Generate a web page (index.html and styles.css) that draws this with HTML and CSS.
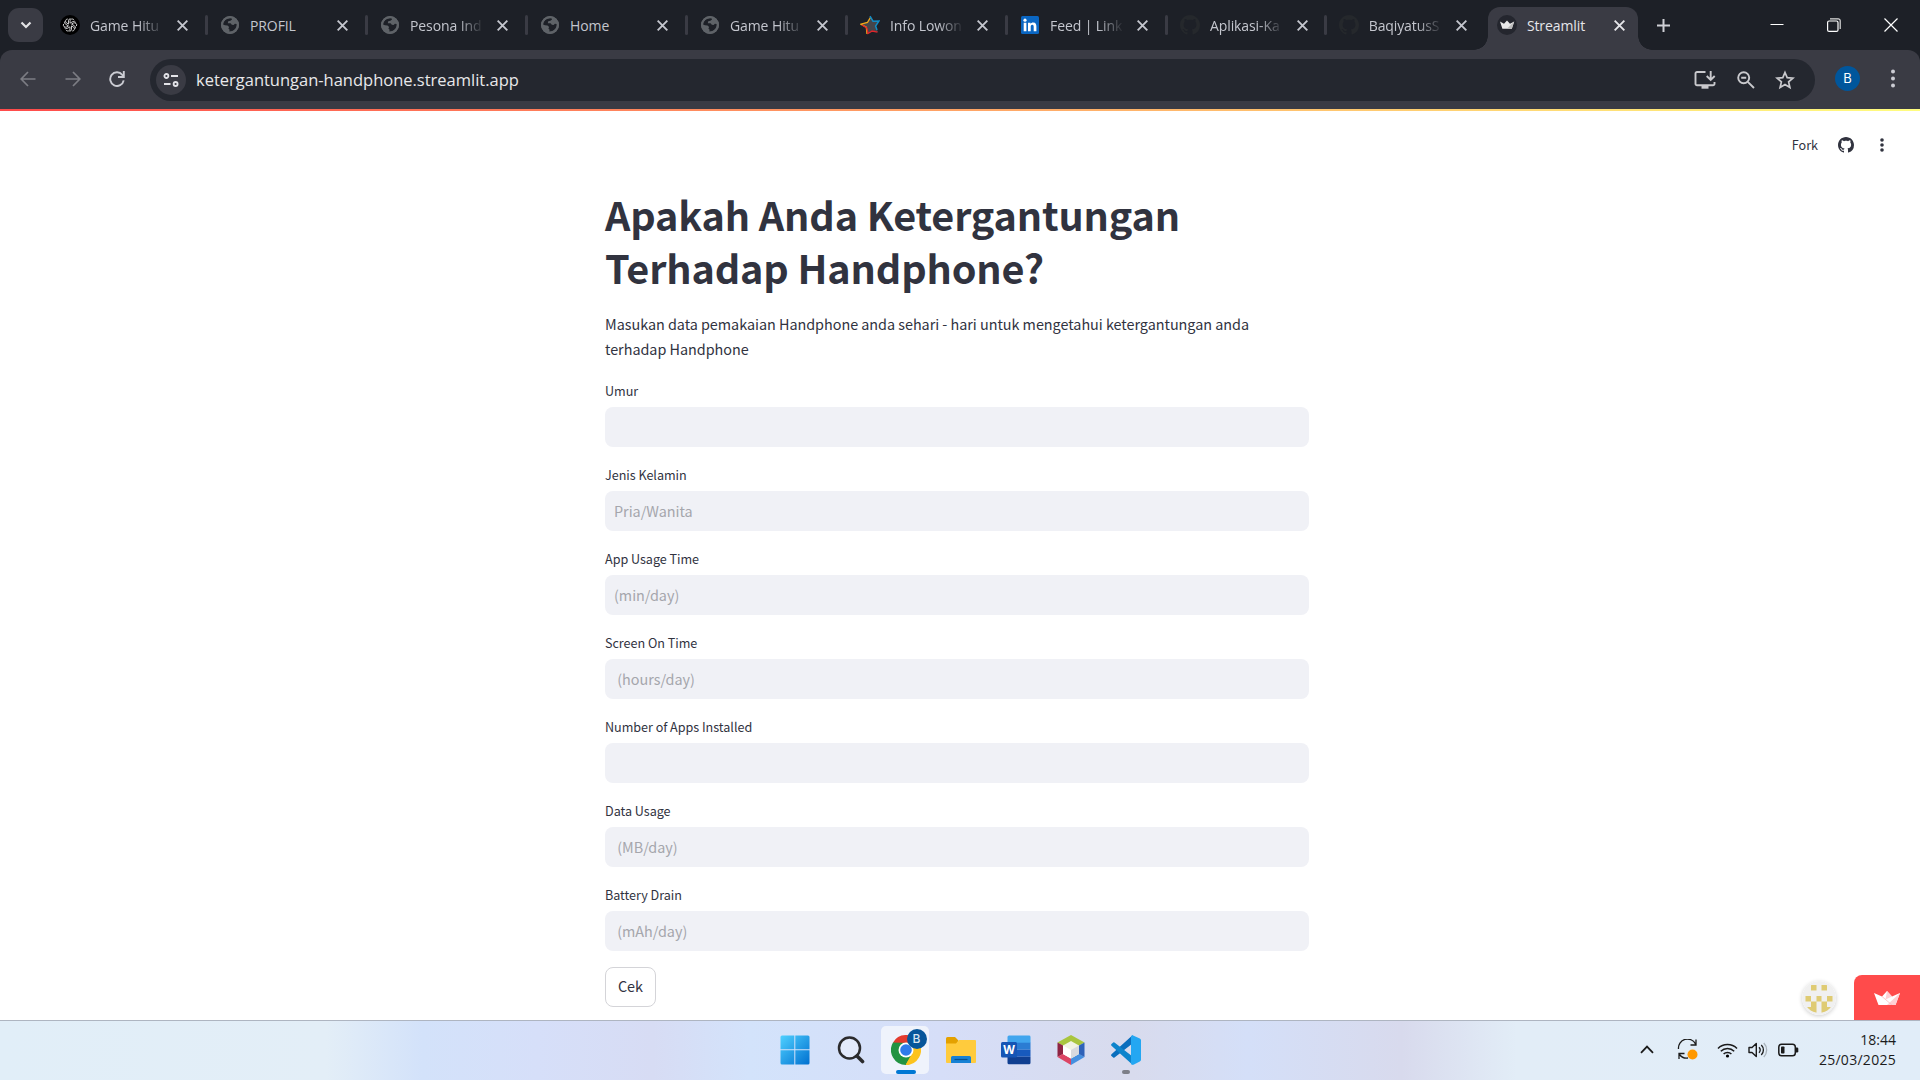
FILE: index.html
```
<!DOCTYPE html>
<html lang="id">
<head>
<meta charset="utf-8">
<title>Streamlit</title>
<link rel="stylesheet" href="styles.css">
</head>
<body>
<svg class="defs" aria-hidden="true">
  <symbol id="globe" viewBox="0 0 20 20"><circle cx="10" cy="10" r="9" fill="#5f6368"/><path d="M4.200 6.200C5.500 4.200 8.500 3 11.600 3.200l.4 1.300-1.600 1.300-2.200.4-.4 2 2.800.1 1.200 1.400 1.800.2 1.300-1.200 1.800.4c.3 3.400-1.700 5.700-4.300 7l-3.100.5.300-1.900-1.200-1.300.700-1.300-1.600-1.700-2.500-.1-1.900-.8c-.2-1.200.2-2.300 1.100-3.300z" fill="#1d2027"/><circle cx="10" cy="10" r="8" fill="none" stroke="#5f6368" stroke-width="2"/></symbol>
  <symbol id="octo" viewBox="0 0 16 16"><path fill="currentColor" d="M8 0C3.58 0 0 3.58 0 8c0 3.540 2.290 6.530 5.470 7.590.4.070.55-.17.55-.38 0-.19-.01-.82-.01-1.490-2.010.37-2.530-.49-2.690-.94-.09-.23-.48-.94-.82-1.130-.28-.15-.68-.52-.01-.53.63-.01 1.080.58 1.230.82.72 1.210 1.870.87 2.330.66.070-.52.28-.87.51-1.070-1.780-.2-3.640-.89-3.640-3.950 0-.87.31-1.590.82-2.150-.08-.2-.36-1.020.08-2.120 0 0 .67-.21 2.200.82.64-.18 1.320-.27 2-.27s1.360.09 2 .27c1.530-1.040 2.200-.82 2.200-.82.44 1.100.16 1.920.08 2.120.51.56.82 1.270.82 2.150 0 3.070-1.870 3.750-3.650 3.950.29.25.54.73.54 1.480 0 1.070-.01 1.930-.01 2.200 0 .21.15.46.55.38A8.010 8.010 0 0 0 16 8c0-4.420-3.580-8-8-8z"/></symbol>
  <symbol id="x" viewBox="0 0 10 10"><path d="M.6.6l8.800 8.800M9.400.6L.6 9.400" stroke="currentColor" stroke-width="1.700" fill="none"/></symbol>
</svg>
<div class="screen">
  <header class="tabstrip">
    <button class="tabsearch"><svg width="12" height="8" viewBox="0 0 12 8"><path d="M1.500 1.500L6 6l4.500-4.500" fill="none" stroke="#e3e3e6" stroke-width="2.200"/></svg></button>
    <div class="tabs">
      <div class="tab"><svg class="fav" viewBox="0 0 20 20"><circle cx="10" cy="10" r="10" fill="#000"/><g fill="none" stroke="#dedede" stroke-width="1" transform="translate(1.500 1.500) scale(.85)"><path id="pet" d="M10 7.800V5.200a2.600 2.600 0 0 1 4.800-1.100M9.900 7.900l3.600-2a2.500 2.500 0 0 1 3.200 1"/><use href="#pet" transform="rotate(60 10 10)"/><use href="#pet" transform="rotate(120 10 10)"/><use href="#pet" transform="rotate(180 10 10)"/><use href="#pet" transform="rotate(240 10 10)"/><use href="#pet" transform="rotate(300 10 10)"/></g></svg><span class="name fade">Game Hitu</span><svg class="close"><use href="#x"/></svg></div>
      <div class="tab"><svg class="fav"><use href="#globe"/></svg><span class="name">PROFIL</span><svg class="close"><use href="#x"/></svg></div>
      <div class="tab"><svg class="fav"><use href="#globe"/></svg><span class="name fade">Pesona Ind</span><svg class="close"><use href="#x"/></svg></div>
      <div class="tab"><svg class="fav"><use href="#globe"/></svg><span class="name">Home</span><svg class="close"><use href="#x"/></svg></div>
      <div class="tab"><svg class="fav"><use href="#globe"/></svg><span class="name fade">Game Hitu</span><svg class="close"><use href="#x"/></svg></div>
      <div class="tab"><svg class="fav" viewBox="0 0 20 20"><path d="M10.500 1l2.500 5.200 6-.2-3.300 5 2.300 6.200-5.600-1.700L7 19l-.5-6.500L1 9l5.500-1.800z" fill="#45464b"/><path d="M10.500 2.500L7.500 7.500 1 9.200l5.300 3L7 19" fill="none" stroke="#f0a818" stroke-width="1.300"/><path d="M2 10l4.800 3L8 18.500l4.200-2.500 5.300 1.200" fill="none" stroke="#e0262c" stroke-width="1.300"/><path d="M10 1.200l3 5 6-.2-3.400 5 1.400 4" fill="none" stroke="#128bc4" stroke-width="1.500"/></svg><span class="name fade">Info Lowon</span><svg class="close"><use href="#x"/></svg></div>
      <div class="tab"><svg class="fav" viewBox="0 0 20 20"><rect x="1" y="1" width="18" height="18" rx="1.500" fill="#0a66c2"/><circle cx="5" cy="5.200" r="1.600" fill="#fff"/><path d="M3.700 7.800h2.700v8.400H3.700zM8 7.800h2.500V9c.5-.8 1.400-1.400 2.700-1.400 2.600 0 3.200 1.700 3.200 4v4.600h-2.700V12c0-1.100-.1-2.200-1.400-2.200s-1.600 1-1.600 2.200v4.200H8z" fill="#fff"/></svg><span class="name fade">Feed | Link</span><svg class="close"><use href="#x"/></svg></div>
      <div class="tab narrow"><svg class="fav dim"><use href="#octo"/></svg><span class="name fade">Aplikasi-Ka</span><svg class="close"><use href="#x"/></svg></div>
      <div class="tab narrow"><svg class="fav dim"><use href="#octo"/></svg><span class="name fade">BaqiyatusS</span><svg class="close"><use href="#x"/></svg></div>
      <div class="tab active"><svg class="fav" viewBox="0 0 20 20"><circle cx="10" cy="10" r="10" fill="#24262e"/><path d="M3 6.500l4 2.200L10 5.500l3 3.200 4.200-2.200-2.400 7.200H5.400z" fill="#e9e9ea"/><path d="M17.200 6.500L10 13.700h4.800z" fill="#bbb"/></svg><span class="name">Streamlit</span><svg class="close"><use href="#x"/></svg></div>
    </div>
    <svg class="newtab" width="13" height="13" viewBox="0 0 13 13"><path d="M6.500 0v13M0 6.500h13" stroke="#cfd0d6" stroke-width="2"/></svg>
    <div class="caption">
      <svg width="14" height="14" viewBox="0 0 14 14"><path d="M.5 6.500h13" stroke="#fff"/></svg>
      <svg width="14" height="14" viewBox="0 0 14 14"><rect x=".6" y="3" width="10.400" height="10.400" rx="1.500" fill="none" stroke="#fff" stroke-width="1.200"/><path d="M3 .8h8.200a2 2 0 0 1 2 2V11" fill="none" stroke="#ddd" stroke-width="1.200"/></svg>
      <svg width="14" height="14" viewBox="0 0 14 14"><path d="M.5.5l13 13M13.500.5l-13 13" stroke="#fff" stroke-width="1.200"/></svg>
    </div>
  </header>
  <nav class="toolbar">
    <div class="navbtns">
      <svg width="16" height="16" viewBox="0 0 16 16"><path d="M15.500 8H1.500M8 1L1.200 8 8 15" fill="none" stroke="#7c7d84" stroke-width="1.700"/></svg>
      <svg width="16" height="16" viewBox="0 0 16 16"><path d="M.5 8h14M8 1l6.800 7L8 15" fill="none" stroke="#7c7d84" stroke-width="1.700"/></svg>
      <svg width="16" height="16" viewBox="0 0 16 16"><path d="M14.700 9.400A6.800 6.800 0 1 1 13.300 3.800L14.500 5" fill="none" stroke="#cbccd3" stroke-width="1.900"/><path d="M14.800 0v6H9" fill="none" stroke="#cbccd3" stroke-width="1.900"/></svg>
    </div>
    <div class="omnibox">
      <span class="site"><svg width="16" height="14" viewBox="0 0 16 14"><g fill="none" stroke="#e3e3e8" stroke-width="1.800"><circle cx="3.400" cy="3" r="2"/><path d="M8 3h7M1 11h6.500"/><circle cx="12.600" cy="11" r="2"/></g></svg></span>
      <span class="url">ketergantungan-handphone.streamlit.app</span>
      <div class="actions">
        <svg width="22" height="20" viewBox="0 0 22 20"><path d="M11.500 2H3a1.500 1.500 0 0 0-1.500 1.500v10.300A1.500 1.500 0 0 0 3 15.300h16a1.500 1.500 0 0 0 1.500-1.500V12" fill="none" stroke="#c9c9cd" stroke-width="1.900"/><path d="M7.500 15h7v3.700h-7z" fill="#c9c9cd"/><path d="M16.700 1v8.500M12.700 6l4 4 4-4" fill="none" stroke="#c9c9cd" stroke-width="1.900"/></svg>
        <svg width="18" height="18" viewBox="0 0 18 18"><circle cx="6.700" cy="6.700" r="5.500" fill="none" stroke="#c9c9cd" stroke-width="1.900"/><path d="M10.800 10.800l6.200 6.200M4.200 6.700h5" stroke="#c9c9cd" stroke-width="1.900"/></svg>
        <svg width="20" height="20" viewBox="0 0 20 20"><path d="M10 2.500l2.200 5.200 5.700.5-4.300 3.700 1.300 5.600-4.900-3-4.900 3 1.300-5.600-4.300-3.700 5.700-.5z" fill="none" stroke="#c9c9cd" stroke-width="1.700"/></svg>
      </div>
    </div>
    <span class="profile">B</span>
    <svg class="menu" width="6" height="20" viewBox="0 0 6 20"><g fill="#cbccd3"><circle cx="3" cy="2.500" r="2"/><circle cx="3" cy="9.500" r="2"/><circle cx="3" cy="16.500" r="2"/></g></svg>
  </nav>
  <main class="page">
    <div class="rainbow"></div>
    <div class="apphead">
      <span class="fork">Fork</span>
      <svg width="16" height="16"><use href="#octo"/></svg>
      <svg width="4" height="14" viewBox="0 0 4 14"><g fill="#31333f"><circle cx="2" cy="2" r="1.800"/><circle cx="2" cy="7" r="1.800"/><circle cx="2" cy="12" r="1.800"/></g></svg>
    </div>
    <form class="form">
      <h1>Apakah Anda Ketergantungan<br>Terhadap Handphone?</h1>
      <p>Masukan data pemakaian Handphone anda sehari - hari untuk mengetahui ketergantungan anda terhadap Handphone</p>
      <label>Umur<span class="input"></span></label>
      <label>Jenis Kelamin<span class="input">Pria/Wanita</span></label>
      <label>App Usage Time<span class="input">(min/day)</span></label>
      <label>Screen On Time<span class="input"> (hours/day)</span></label>
      <label>Number of Apps Installed<span class="input"></span></label>
      <label>Data Usage<span class="input"> (MB/day)</span></label>
      <label>Battery Drain<span class="input"> (mAh/day)</span></label>
      <button class="check" type="button">Cek</button>
    </form>
    <div class="host">
      <svg class="creator" width="34" height="34" viewBox="0 0 34 34"><clipPath id="c"><circle cx="17" cy="17" r="15"/></clipPath><circle cx="17" cy="17" r="17" fill="#f0f0f0"/><path clip-path="url(#c)" fill="#dfcb73" d="M9 4h5.500v5.500H9zM19.500 4H25v5.500h-5.500zM3.500 15H9v5.500H3.500zM14.500 15h5v5.500h-5zM25 15h5.500v5.500H25zM9 20.500h5.500V32h-11v-6H9zM19.500 20.500H25V26h5.500v6h-11z"/></svg>
      <span class="badge"><svg width="26" height="14" viewBox="0 0 26 14"><path d="M0 2l8 3.500L13 0l5 5.500L26 2l-4.500 12h-17z" fill="#fff"/><path d="M13 0l5 5.500-6.500 3z" fill="#ffd0d4"/><path d="M26 2l-4.500 12H13z" fill="#ffd0d4"/><path d="M8 5.500L18 14" stroke="#ffbcbf" stroke-width=".8"/></svg></span>
    </div>
  </main>
  <footer class="taskbar">
    <div class="apps">
      <span class="app"><svg width="30" height="30" viewBox="0 0 30 30"><defs><linearGradient id="w" x1="0" y1="0" x2="1" y2="1"><stop offset="0" stop-color="#4fd0ff"/><stop offset="1" stop-color="#0070d0"/></linearGradient></defs><path fill="url(#w)" d="M.5 2a1.500 1.500 0 0 1 1.500-1.500h12.300v13.800H.5zM15.300.5H28A1.500 1.500 0 0 1 29.500 2v12.300H15.300zM.5 15.300h13.800v14.200H2A1.500 1.500 0 0 1 .5 28zM15.300 15.300h14.200V28a1.500 1.500 0 0 1-1.500 1.500H15.300z"/></svg></span>
      <span class="app"><svg width="28" height="28" viewBox="0 0 28 28"><circle cx="12.500" cy="12" r="10.500" fill="#e3eafb" stroke="#2b2b2d" stroke-width="2.500"/><path d="M20 20l5.500 5.500" stroke="#2b2b2d" stroke-width="3.600" stroke-linecap="round"/></svg></span>
      <span class="app current"><svg width="30" height="30" viewBox="0 0 30 30"><path d="M15 15L2 7.500A15 15 0 0 1 28 7.500z" fill="#e33b2e"/><path d="M15 15L28 7.500A15 15 0 0 1 15 30z" fill="#fcc31e"/><path d="M15 15v15A15 15 0 0 1 2 7.500z" fill="#229342"/><path d="M15 7.800H28.200l-7 10.800z" fill="#fcc31e"/><path d="M8.800 18.600L2 7.500 15 7.800z" fill="#229342"/><path d="M2 7.500h26L15 8z" fill="#e33b2e"/><path d="M8.800 18.600L15 15l6.200 3.600L14.500 30z" fill="#229342"/><path d="M21.200 18.600L14.700 30H18l7-9z" fill="#fcc31e"/><circle cx="15" cy="15" r="7.500" fill="#fff"/><circle cx="15" cy="15" r="5.800" fill="#2f7bea"/></svg><b class="who">B</b><i class="run wide"></i></span>
      <span class="app"><svg width="30" height="28" viewBox="0 0 30 28"><path d="M0 2.500A1.500 1.500 0 0 1 1.500 1H9l3.500 3.500L10 9H0z" fill="#e4a100"/><path d="M0 7.500h10L13 4h16a1 1 0 0 1 1 1v21a1 1 0 0 1-1 1H1a1 1 0 0 1-1-1z" fill="#ffcb3d"/><path d="M5 27v-5.500A1.500 1.500 0 0 1 6.500 20h17a1.500 1.500 0 0 1 1.500 1.500V27z" fill="#1781d4"/><path d="M8.500 23.500h13" stroke="#07508f" stroke-width="1.200"/></svg></span>
      <span class="app"><svg width="30" height="30" viewBox="0 0 30 30"><path d="M6.500 2A1.500 1.500 0 0 1 8 .5h20A1.500 1.500 0 0 1 29.500 2v6h-23z" fill="#41a5ee"/><path d="M6.500 7.700h23v7h-23z" fill="#2b7cd3"/><path d="M6.500 14.700h23v7h-23z" fill="#185abd"/><path d="M6.500 21.700h23v6A1.500 1.500 0 0 1 28 29.200H8a1.500 1.500 0 0 1-1.500-1.500z" fill="#103f91"/><rect x="0" y="7" width="16" height="15.500" rx="1.500" fill="#1555b5"/><text class="wordmark" x="8" y="19" text-anchor="middle">W</text></svg></span>
      <span class="app"><svg width="28" height="32" viewBox="0 0 28 32"><path d="M14 1l13.500 7.500L14 16 .5 8.500z" fill="#a9c53f"/><path d="M.5 8.500L6 11.500V20L.5 23z" fill="#8e2443"/><path d="M.5 23L6 19.800l8 4.500V31z" fill="#dc4565"/><path d="M14 31v-6.700l8-4.500 5.500 3.200z" fill="#4590e0"/><path d="M27.500 8.500V23L22 20v-8.500z" fill="#2f62b8"/><path d="M14 7l8 4.500v8.500l-8 4.500L6 20v-8.500z" fill="#f1f3e4"/><path d="M14 16l8-4.500v8.500l-8 4.500z" fill="#d8dadf"/><path d="M14 16l-8-4.500v8.500l8 4.500z" fill="#fff"/></svg></span>
      <span class="app"><svg width="30" height="30" viewBox="0 0 30 30"><path d="M21.500 8.500L3.500 22.500a1 1 0 0 1-1.300 0L.5 21a1.200 1.200 0 0 1 0-1.700L21.500.3z" fill="#0a6ebd"/><path d="M21.500 21.500L3.500 7.500a1 1 0 0 0-1.300 0L.5 9a1.200 1.200 0 0 0 0 1.700l21 19z" fill="#0d84cc"/><path d="M21 0l7.800 3.400A2 2 0 0 1 30 5.200v19.600a2 2 0 0 1-1.200 1.800L22.500 29.700c-1 .4-2.500 0-2.500-1.500V2z" fill="#24a7f2"/></svg><i class="run"></i></span>
    </div>
    <div class="tray">
      <svg width="14" height="9" viewBox="0 0 14 9"><path d="M1 7.800L7 1.600l6 6.200" fill="none" stroke="#1b1b1b" stroke-width="1.800"/></svg>
      <svg class="sync" width="22" height="21" viewBox="0 0 22 21"><path d="M1.500 10A9 9 0 0 1 18.500 5M19 .5v5.500h-5.500M2 20v-5.500h5.500M2.500 15.500A9 9 0 0 0 11 19" fill="none" stroke="#1b1b1b" stroke-width="1.300"/><circle cx="15.500" cy="15.500" r="5" fill="#ff9800"/></svg>
      <svg class="wifi" width="21" height="16" viewBox="0 0 21 16"><g fill="none" stroke="#1b1b1b" stroke-width="1.500"><path d="M1 6.500a13.400 13.400 0 0 1 19 0M3.800 9.300a9.500 9.500 0 0 1 13.400 0M6.600 12a5.500 5.500 0 0 1 7.800 0"/></g><circle cx="10.500" cy="14" r="1.600"/></svg>
      <svg class="vol" width="20" height="16" viewBox="0 0 20 16"><path d="M1 5.500h3L8.300 1.500v13L4 10.500H1z" fill="none" stroke="#1b1b1b" stroke-width="1.400" stroke-linejoin="round"/><path d="M11 5.300a4 4 0 0 1 0 5.400M13.300 3a7 7 0 0 1 0 10" fill="none" stroke="#1b1b1b" stroke-width="1.300"/><path d="M15.800 1a10 10 0 0 1 0 14" fill="none" stroke="#a9b2ba" stroke-width="1.300"/></svg>
      <svg class="bat" width="21" height="14" viewBox="0 0 21 14"><rect x=".8" y="1.200" width="16.500" height="11.500" rx="2.800" fill="none" stroke="#1b1b1b" stroke-width="1.500"/><rect x="3" y="3.500" width="3.500" height="7" rx=".8" fill="#1b1b1b"/><path d="M18 4.500h1a1.300 1.300 0 0 1 1.300 1.300v2.400A1.300 1.300 0 0 1 19 9.500h-1z" fill="#1b1b1b"/></svg>
      <div class="clock"><span>18:44</span><span class="date">25/03/2025</span></div>
    </div>
  </footer>
</div>
</body>
</html>
```
FILE: styles.css
```
* { box-sizing: border-box; }
body { margin: 0; overflow: hidden; font-family: "Open Sans", sans-serif; }
svg { display: block; flex: none; }
button { font: inherit; border: 0; padding: 0; }
.defs { position: absolute; width: 0; height: 0; }
.screen { width: 1920px; height: 1080px; display: flex; flex-direction: column; background: #1d2027; }

/* Tab strip */
.tabstrip { height: 50px; flex: none; display: flex; align-items: center; background: #1d2027; }
.tabsearch { width: 35px; height: 34px; margin: 0 5px 0 8px; border-radius: 11px; background: #3a3b44; display: grid; place-items: center; }
.tabs { display: flex; align-self: stretch; }
.tab { position: relative; width: 160px; height: 50px; padding-left: 12px; display: flex; align-items: center; color: #c4c6ce; }
.tab::after { content: ""; position: absolute; right: 0; top: 15px; width: 3px; height: 20px; border-radius: 2px; background: #3a3b44; }
.narrow { width: 158.700px; }
.fav { width: 20px; height: 20px; }
.dim { color: #25282c; }
.name { width: 76px; margin-left: 10px; font-size: 14px; line-height: 20px; letter-spacing: -0.1px; white-space: nowrap; padding-top: 1px; }
.fade { -webkit-mask-image: linear-gradient(90deg, #000 48px, transparent 74px); mask-image: linear-gradient(90deg, #000 48px, transparent 74px); }
.close { width: 11px; height: 11px; margin-left: 11px; }
.narrow:has(+ .active)::after { display: none; }
.active { width: 150.500px; height: 43px; align-self: flex-end; margin-left: 2.500px; padding: 0 0 7px 9px; background: #3a3b44; border-radius: 12px 12px 0 0; color: #e6e6ea; }
.active::before, .active::after { content: ""; position: absolute; top: auto; bottom: 0; width: 14px; height: 14px; border-radius: 0; }
.active::before { left: -14px; background: radial-gradient(circle at 0 0, transparent 13.500px, #3a3b44 14px); }
.active::after { right: -14px; background: radial-gradient(circle at 100% 0, transparent 13.500px, #3a3b44 14px); }
.newtab { margin-left: 19px; }
.caption { margin-left: auto; padding: 0 22px 1px 0; display: flex; gap: 43px; }

/* Toolbar */
.toolbar { height: 59px; flex: none; display: flex; align-items: center; background: #3a3b44; border-radius: 12px 12px 0 0; }
.navbtns { width: 150px; padding: 0 0 2px 20px; display: flex; gap: 28.500px; }
.omnibox { width: 1665px; height: 42px; padding: 0 20px 0 6px; display: flex; align-items: center; border-radius: 21px; background: #24272f; }
.site { width: 30px; height: 30px; border-radius: 50%; background: #3a3b44; display: grid; place-items: center; }
.url { margin-left: 10px; font-size: 16.500px; color: #e8e8ea; letter-spacing: -0.01px; }
.actions { margin-left: auto; display: flex; align-items: center; gap: 20.500px; }
.profile { width: 25px; height: 25px; margin: -2px 0 0 20px; border-radius: 50%; background: #00569c; color: #fff; font: 13px/25px Inter, sans-serif; text-align: center; }
.menu { margin: -1px 0 0 29.500px; }

/* Streamlit page */
.page { position: relative; flex: 1; background: #fff; border-bottom: 1px solid #aeb5c1; font-family: "Noto Sans CJK SC", sans-serif; color: #31333f; }
.rainbow { height: 2px; background: linear-gradient(90deg, #ff4b4b, #fffd80); }
.apphead { height: 68px; padding: 0 36px 0 0; display: flex; align-items: center; justify-content: flex-end; font-size: 12.600px; }
.fork { padding-bottom: 2px; }
.apphead svg:nth-of-type(1) { margin: 0 26px 0 20px; }
.form { width: 704px; margin-left: 605px; padding-top: 8px; display: flex; flex-direction: column; }
h1 { margin: 0; font-size: 39.600px; line-height: 53px; font-weight: 700; letter-spacing: -0.14px; }
p { margin: 17.500px 0 19.500px; font-size: 14.400px; line-height: 25.500px; letter-spacing: -0.03px; }
label { height: 84px; font-size: 12.600px; line-height: 19px; letter-spacing: -0.03px; }
.input { display: block; height: 40px; margin-top: 7px; padding-left: 9px; border-radius: 8px; background: #f0f1f6; color: #a5a6ac; font-size: 14.400px; line-height: 40px; letter-spacing: -0.02px; white-space: pre; }
.check { width: 51px; height: 40px; margin-top: -2px; padding-bottom: 2px; border: 1px solid #d4d4d8; border-radius: 8px; background: #fff; color: #31333f; font-size: 14.400px; line-height: 1; }
.host { position: absolute; right: 0; bottom: 0; display: flex; align-items: center; }
.creator { margin-right: 18px; border-radius: 50%; box-shadow: 0 1px 4px #0003; }
.badge { width: 66px; height: 45px; border-radius: 8px 0 0 0; background: #ff4b4b; display: grid; place-items: center; }

/* Taskbar */
.taskbar { height: 59px; flex: none; display: grid; grid-template-columns: 767px 1fr auto; align-items: center; background: linear-gradient(90deg, #e1eef8 0, #e3eef7 17%, #d3e2fa 22%, #d6dff9 28%, #d7dcf4 34%, #d3e3fb 39%, #d6def8 49%, #d8dbed 59%, #d4dff8 65%, #d8daed 73%, #e2edf7 79%, #e1edf8 100%); }
.apps { grid-column: 2; display: flex; }
.app { position: relative; width: 55.200px; height: 59px; padding-bottom: 1px; display: grid; place-items: center; }
.current::before { content: ""; position: absolute; inset: 5px 3.600px 6px; border-radius: 5px; background: #eff3fc; }
.app:nth-child(n+2):nth-child(-n+5) svg { position: relative; left: 1px; }
.who { position: absolute; right: 6px; top: 8px; width: 20px; height: 20px; border-radius: 50%; background: #07569a; color: #d8e4f0; font: 500 12px/20px Inter, sans-serif; text-align: center; }
.run { position: absolute; bottom: 6px; left: 50%; width: 8px; height: 4px; margin-left: -4px; border-radius: 2px; background: #7d7f88; }
.wide { width: 20px; margin-left: -9px; background: #0078d4; }
.wordmark { font: 700 12px "Open Sans", sans-serif; fill: #fff; }
.tray { display: flex; align-items: center; padding: 0 24px 2px 0; }
.sync { margin-left: 23px; }
.wifi { margin-left: 18px; }
.vol { margin-left: 10px; }
.bat { margin-left: 10px; }
.clock { width: 97px; display: flex; flex-direction: column; align-items: flex-end; font-size: 14px; line-height: 20px; color: #1b1b1b; }
.date { letter-spacing: 0.28px; }
```
